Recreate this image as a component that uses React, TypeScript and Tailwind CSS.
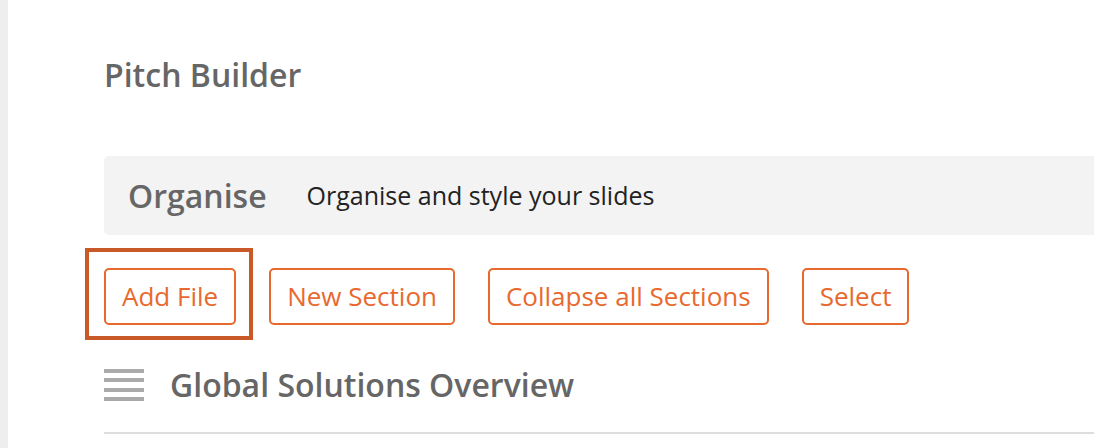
import React from 'react';

const ACTIONS = ['Add File', 'New Section', 'Collapse all Sections', 'Select'];

const App: React.FC = () => {
  return (
    <div
      className="flex h-[448px] w-full overflow-hidden bg-white"
      style={{ fontFamily: '"Open Sans", "Liberation Sans", sans-serif' }}
    >
      {/* left rail */}
      <div className="w-[8px] shrink-0 bg-[#eeeeee]" />

      <div className="flex-1 pl-[96px] pt-[55px]">
        <h1 className="text-[32px] leading-[40px] font-semibold text-[#666666]">Pitch Builder</h1>

        {/* Step banner */}
        <div className="mt-[61px] flex h-[79px] items-center gap-[40px] rounded-l-[5px] bg-[#f3f3f3] pl-[24px]">
          <span className="text-[32px] font-semibold text-[#666666]">Organise</span>
          <span className="text-[25px] text-[#222222]">Organise and style your slides</span>
        </div>

        {/* Actions */}
        <div className="mt-[33px] flex items-center gap-[33px]">
          {ACTIONS.map((label, i) => (
            <div key={label} className="relative">
              <button className="h-[57px] rounded-[5px] border-2 border-[#e8692e] bg-white px-[16px] text-[26px] text-[#e8692e]">
                {label}
              </button>
              {i === 0 && (
                <div className="pointer-events-none absolute -top-[20px] -bottom-[15px] -left-[19px] -right-[17px] border-4 border-[#c95a28]" />
              )}
            </div>
          ))}
        </div>

        {/* Section row */}
        <div className="mt-[44px] flex items-center gap-[26px]">
          <div className="flex w-[40px] flex-col gap-[5.3px]">
            <span className="h-[4px] bg-[#aaaaaa]" />
            <span className="h-[4px] bg-[#aaaaaa]" />
            <span className="h-[4px] bg-[#aaaaaa]" />
            <span className="h-[4px] bg-[#aaaaaa]" />
          </div>
          <span className="text-[32px] leading-[32px] font-semibold text-[#666666]">Global Solutions Overview</span>
        </div>
        <div className="mt-[31px] h-[2px] bg-[#dddddd]" />
      </div>
    </div>
  );
};

export default App;
